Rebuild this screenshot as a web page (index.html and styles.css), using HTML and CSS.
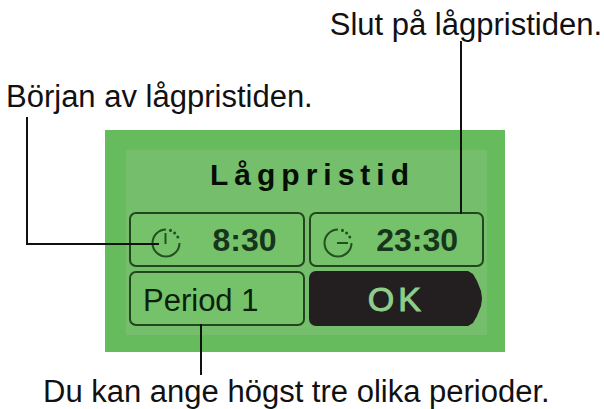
FILE: index.html
```
<!DOCTYPE html>
<html lang="sv">
  <head>
    <meta charset="utf-8">
    <meta name="viewport" content="width=device-width, initial-scale=1">
    <title>Lågpristid</title>
    <link rel="stylesheet" href="styles.css">
  </head>
  <body>
    <p class="note note-end">Slut på lågpristiden.</p>
    <p class="note note-start">Början av lågpristiden.</p>
    <main class="display">
      <div class="screen">
        <h1 class="title">Lågpristid</h1>
        <div class="keys">
          <button type="button" class="key time start">
            <svg class="clock" viewBox="0 0 30 30" aria-hidden="true">
              <path d="M15 1.5A13.5 13.5 0 1 0 28.5 15M14.5 5V16"/>
              <path class="dots" d="M19.5 2.3v.1M23.6 5v.1M26.8 9v.1"/>
            </svg>
            <span>8:30</span>
          </button>
          <button type="button" class="key time end">
            <svg class="clock" viewBox="0 0 30 30" aria-hidden="true">
              <path d="M15 1.5A13.5 13.5 0 1 0 28.5 15M14 15H25"/>
              <path class="dots" d="M19.5 2.3v.1M23.6 5v.1M26.8 9v.1"/>
            </svg>
            <span>23:30</span>
          </button>
          <button type="button" class="key period">Period 1</button>
          <button type="button" class="key ok">OK</button>
        </div>
      </div>
    </main>
    <p class="note note-period">Du kan ange högst tre olika perioder.</p>
  </body>
</html>
```
FILE: styles.css
```
* {
    box-sizing: border-box;
}
body {
    margin: 0;
    padding-top: 7px;
    background: #fff;
    color: #111;
    font-family: "Liberation Sans", Arial, sans-serif;
}
.note {
    margin: 0;
    font-size: 31px;
    line-height: 35px;
}
.note-end {
    padding-right: 2px;
    text-align: right;
}
.note-start {
    margin-top: 37px;
    padding-left: 6px;
}
.note-period {
    margin-top: 22px;
    padding-left: 43px;
}
.display {
    margin: 16px 99px 0 105px;
    padding: 20px 18px 17px 21px;
    background: #66bc5c;
}
.screen {
    padding: 7px 3px 9px;
    background: #75be6c;
}
.title {
    margin: 0 0 19px;
    padding-left: 12px;
    color: #050f04;
    font-size: 30px;
    line-height: 36px;
    letter-spacing: 6px;
    text-align: center;
}
.keys {
    display: grid;
    grid-template-columns: 1fr 1fr;
    gap: 4px;
}
.key {
    position: relative;
    height: 55px;
    margin: 0;
    border: 2px solid #23451f;
    border-radius: 7px;
    background: #75c26b;
    color: #0b200a;
    font-family: inherit;
    font-size: 31px;
    text-align: left;
}
.time {
    display: flex;
    align-items: center;
    justify-content: space-between;
    padding: 2px 26px 0 20px;
    color: #17351a;
    font-size: 32px;
    font-weight: bold;
}
.end {
    padding: 2px 24px 0 12px;
}
.period {
    padding: 4px 12px 0;
}
.ok {
    padding: 2px 0 0;
    border: 0;
    background: #231f20;
    color: #8fce8a;
    font-size: 34px;
    letter-spacing: 4px;
    text-align: center;
    -webkit-text-stroke: 1px #8fce8a;
    /* pointed right edge */
    clip-path: polygon(0 0, calc(100% - 16px) 0, calc(100% - 11px) 3px, calc(100% - 7px) 10px, calc(100% - 3px) 20px, calc(100% - 2px) 50%, calc(100% - 3px) 35px, calc(100% - 7px) 45px, calc(100% - 11px) 52px, calc(100% - 16px) 100%, 0 100%);
}
.clock {
    width: 30px;
    height: 30px;
    margin-top: 4px;
    fill: none;
    stroke: #23501f;
    stroke-width: 2;
}
.dots {
    stroke-width: 3;
    stroke-linecap: round;
}

/* leader lines from the notes to the keys */
.start::before,
.end::before,
.period::before {
    content: "";
    position: absolute;
    z-index: 1;
    border: 0 solid #111;
}
.start::before {
    right: calc(100% - 28px);
    bottom: 20px;
    width: 131px;
    height: 126px;
    border-width: 0 0 2px 2px;
}
.end::before {
    right: 20px;
    bottom: 100%;
    height: 173px;
    border-left-width: 2px;
}
.period::before {
    top: 100%;
    left: 69px;
    height: 51px;
    border-left-width: 2px;
}
```
